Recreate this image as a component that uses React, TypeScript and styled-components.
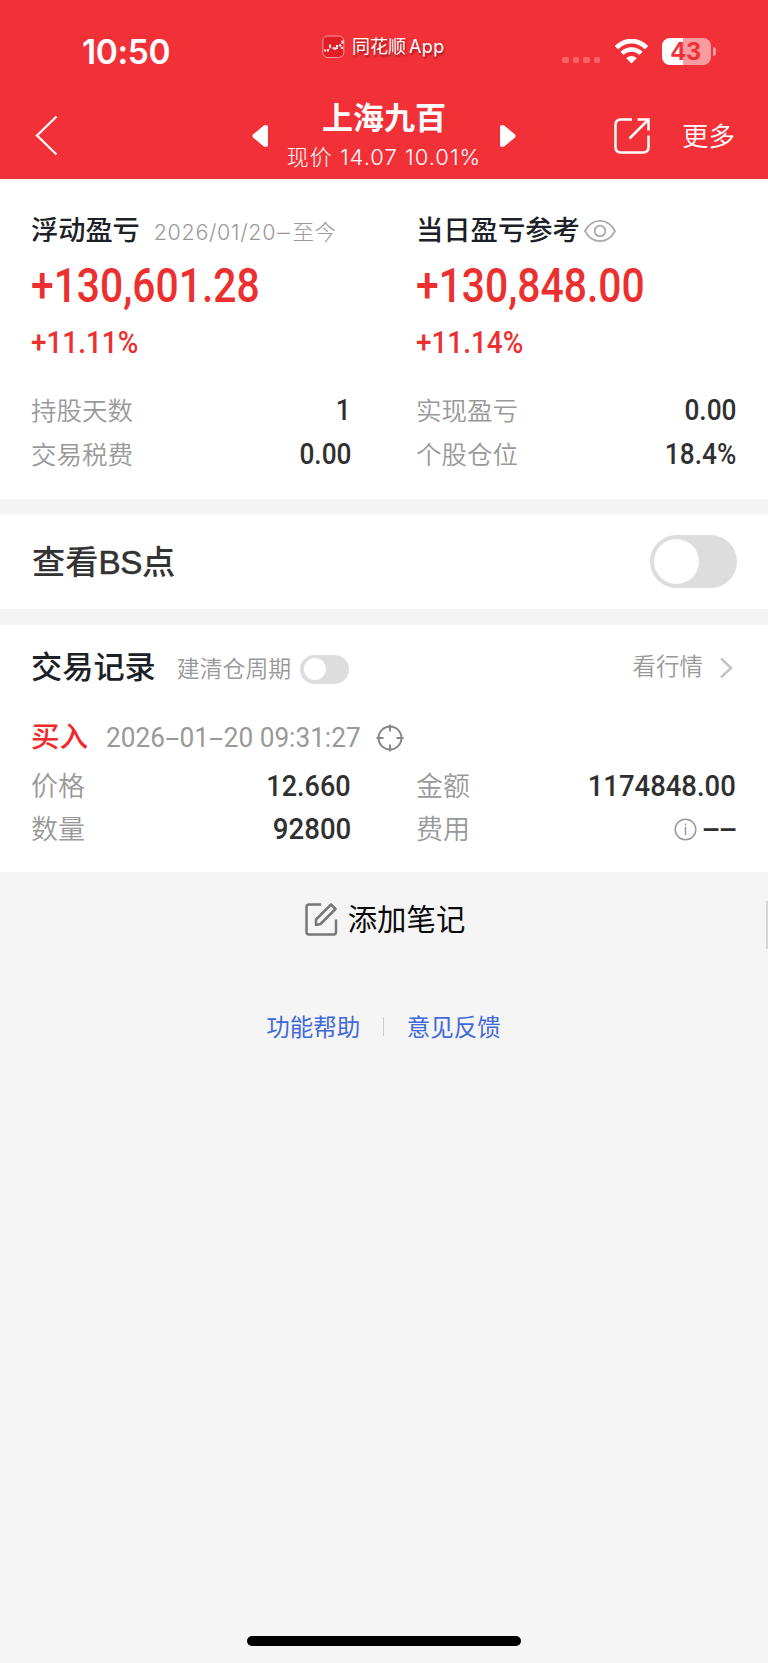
import React from 'react';
import styled, { createGlobalStyle } from 'styled-components';

const RED = '#f23038';
const PRICE_RED = '#ec2f2f';
const CJK = '"Noto Sans CJK SC", sans-serif';

const GlobalStyle = createGlobalStyle`
  * { box-sizing: border-box; }
  body { margin: 0; background: #f5f5f5; font-family: Inter, ${CJK}; }
`;

const Screen = styled.div`
  position: relative;
  display: flex;
  flex-direction: column;
  width: 768px;
  height: 1663px;
  background: #f5f5f5;
  overflow: hidden;
`;

/* ---------- header ---------- */
const Header = styled.header`
  height: 179px;
  background: ${RED};
  color: #fff;
`;

const StatusBar = styled.div`
  display: grid;
  grid-template-columns: 321px 1fr 206px;
  height: 94px;
  padding-top: 8px;
`;

const Clock = styled.div`
  padding-left: 82px;
  line-height: 88px;
  font-weight: 600;
  font-size: 33.5px;
  letter-spacing: -0.4px;
`;

const AppSource = styled.div`
  display: flex;
  align-items: center;
  height: 78px;
  gap: 7px;
  font-size: 18px;
  line-height: 26px;
  white-space: nowrap;
  text-shadow: 1px 2px 2px rgba(80, 0, 0, 0.5);
`;

const AppName = styled.span``;

const AppLatin = styled.span`
  margin-left: 3px;
  letter-spacing: 0.4px;
`;

const StatusIcons = styled.div`
  display: flex;
  align-items: center;
  height: 86px;
`;

const SignalDots = styled.div`
  display: flex;
  gap: 4px;
  margin-top: 18px;
  i {
    width: 6.5px;
    height: 6.5px;
    border-radius: 2px;
    background: rgba(255, 255, 255, 0.25);
  }
`;

const Wifi = styled.svg`
  margin-left: 15px;
`;

const Battery = styled.div`
  width: 49px;
  height: 27px;
  margin-left: 14px;
  border-radius: 8px;
  background: linear-gradient(90deg, #fff 21px, rgba(255, 255, 255, 0.52) 21px);
  color: ${RED};
  font-family: "Liberation Sans", sans-serif;
  font-weight: 700;
  font-size: 26px;
  letter-spacing: 1px;
  line-height: 27px;
  text-align: center;
`;

const BatteryNub = styled.div`
  width: 3px;
  height: 9px;
  margin-left: 1.5px;
  border-radius: 0 4px 4px 0;
  background: rgba(255, 255, 255, 0.5);
`;

const NavBar = styled.nav`
  display: flex;
  align-items: center;
  height: 84px;
  padding: 0 33px 0 34px;
`;

const BackIcon = styled.svg`
  margin-right: 194px;
`;

const StockTitle = styled.div`
  width: 230px;
  text-align: center;
  white-space: nowrap;
`;

const StockName = styled.div`
  font-size: 31px;
  font-weight: 700;
  line-height: 41px;
  height: 42px;
`;

const StockPrice = styled.div`
  font-size: 22px;
  font-weight: 300;
  line-height: 36px;
  height: 36px;
  letter-spacing: 1px;
`;

const ShareIcon = styled.svg`
  margin-left: 97px;
`;

const More = styled.div`
  margin-left: auto;
  font-size: 26.5px;
  font-weight: 350;
  line-height: 42px;
`;

/* ---------- shared ---------- */
const Panel = styled.section<{ $h: number }>`
  height: ${p => p.$h}px;
  background: #fff;
`;

const Gap = styled.div<{ $h: number }>`
  height: ${p => p.$h}px;
  background: #f4f4f4;
`;

const Columns = styled.div`
  display: grid;
  grid-template-columns: 320px 320px;
  column-gap: 65px;
  padding-left: 31px;
`;

const Heading = styled.h2<{ $size: number }>`
  margin: 0;
  font-size: ${p => p.$size}px;
  font-weight: 500;
  line-height: 40px;
  color: #1b2126;
  white-space: nowrap;
`;

const Digits = styled.span<{ $squeeze: number; $right?: boolean }>`
  display: inline-block;
  font-family: Roboto, sans-serif;
  white-space: nowrap;
  transform: scaleX(${p => p.$squeeze});
  transform-origin: ${p => (p.$right ? 'right' : 'left')} center;
`;

const DataRow = styled.div<{ $h: number }>`
  display: flex;
  align-items: center;
  justify-content: space-between;
  height: ${p => p.$h}px;
`;

const Label = styled.span<{ $size: number }>`
  font-size: ${p => p.$size}px;
  font-weight: 350;
  line-height: 40px;
  color: #999;
`;

const Value = styled(Digits)<{ $size: number; $lift?: number }>`
  padding-bottom: ${p => p.$lift ?? 0}px;
  font-size: ${p => p.$size}px;
  font-weight: 500;
  color: #303030;
`;

const Track = styled.span<{ $w: number; $h: number; $pad: number }>`
  display: inline-flex;
  flex: none;
  width: ${p => p.$w}px;
  height: ${p => p.$h}px;
  padding: ${p => p.$pad}px;
  border-radius: ${p => p.$h / 2}px;
  background: #ddd;
  &::before {
    content: '';
    height: 100%;
    aspect-ratio: 1;
    border-radius: 50%;
    background: #fff;
  }
`;

const CycleTrack = styled(Track)`
  margin-left: 9px;
  margin-top: 4px;
`;

const Wide = styled.span<{ $m: number }>`
  display: inline-block;
  margin: 0 ${p => p.$m}px;
  transform: scaleX(1.9);
`;

/* ---------- summary ---------- */
const SummaryTop = styled(Columns)`
  padding-top: 30px;
`;

const HeadRow = styled.div`
  display: flex;
  align-items: center;
  height: 41px;
  padding-top: 1px;

  ${Heading} {
    padding-top: 2px;
  }
`;

const Eye = styled.svg`
  margin: 2px 0 0 3px;
`;

const Period = styled.span`
  margin: 1px 0 0 14px;
  font-size: 21.5px;
  font-weight: 300;
  color: #999;
  letter-spacing: 0.65px;
  white-space: nowrap;
`;

const Profit = styled.div`
  height: 69.5px;
  line-height: 69px;
  font-size: 48px;
  font-weight: 500;
  color: ${PRICE_RED};
`;

const Percent = styled.div`
  height: 44px;
  line-height: 43px;
  font-size: 31px;
  font-weight: 500;
  color: ${PRICE_RED};
`;

const Stats = styled(Columns)`
  padding-top: 26px;
`;

/* ---------- BS row ---------- */
const BsRow = styled.div`
  display: flex;
  align-items: center;
  justify-content: space-between;
  height: 95px;
  padding: 0 31.5px 0 32px;
`;

const BsLabel = styled.span`
  padding-bottom: 4px;
  font-family: "Liberation Sans", ${CJK};
  font-size: 33.2px;
  font-weight: 450;
  color: #333;
  white-space: nowrap;
`;

const BsLetters = styled.span`
  letter-spacing: -0.3px;
  -webkit-text-stroke: 0.6px #333;
`;

/* ---------- records ---------- */
const RecordHead = styled.div`
  display: flex;
  align-items: center;
  height: 84px;
  padding: 0 35px 0 31px;
`;

const Muted = styled.span<{ $size: number; $ml: number }>`
  margin-left: ${p => p.$ml}px;
  font-size: ${p => p.$size}px;
  font-weight: 350;
  line-height: 36px;
  color: #999;
  white-space: nowrap;
`;

const CycleLabel = styled(Muted)`
  padding-top: 3px;
`;

const ToQuote = styled.div`
  display: flex;
  align-items: center;
  margin-left: auto;
  margin-bottom: 1px;
  gap: 16px;
`;

const Trade = styled.div`
  display: flex;
  align-items: center;
  height: 56px;
  padding-left: 31px;
`;

const Side = styled.span`
  width: 75px;
  padding-bottom: 5px;
  font-size: 28.5px;
  font-weight: 500;
  color: #f02a2a;
`;

const Time = styled.div`
  width: 270px;
  font-size: 28px;
  font-weight: 400;
  color: #999;
`;

const Target = styled.svg`
  margin-top: 2px;
`;

const Fee = styled.div`
  display: flex;
  align-items: center;
  gap: 5px;
  padding-bottom: 2px;
`;

/* ---------- footer ---------- */
const AddNote = styled.div`
  display: flex;
  align-items: center;
  justify-content: center;
  height: 94px;
  gap: 10px;
  padding-left: 1px;
  font-size: 29.4px;
  color: #0a0a0a;
`;

const NoteText = styled.span`
  padding-bottom: 5px;
`;

const Links = styled.div`
  display: flex;
  align-items: center;
  justify-content: center;
  height: 120px;
  gap: 22.5px;
  padding-right: 1px;
  font-size: 23.5px;
  color: #4169d8;
`;

const Divider = styled.span`
  width: 1.5px;
  height: 19px;
  background: #ccc;
`;

const HomeBar = styled.div`
  width: 274px;
  height: 10px;
  margin: auto auto 17px 247px;
  border-radius: 5px;
  background: #000;
`;

const ScrollThumb = styled.div`
  position: absolute;
  right: 0;
  top: 901px;
  width: 2px;
  height: 48px;
  background: #d6d6d6;
`;

const stats = [
  ['持股天数', '1', '实现盈亏', '0.00'],
  ['交易税费', '0.00', '个股仓位', '18.4%'],
];

export default function App() {
  return (
    <Screen>
      <GlobalStyle />
      <Header>
        <StatusBar>
          <Clock>10:50</Clock>
          <AppSource>
            <svg width="24" height="24" viewBox="0 0 24 24">
              <rect x="1.8" y="1" width="21" height="21.5" rx="5" fill="#df1f25" stroke="#f79a9d" strokeWidth="1" />
              <path d="M3 15.200l2 .6M7 14v2.600M9 9.500v3M12 14l1.500-1 1.500 1.500M16 10v4M18.500 9.500l1.500 2M21.500 5.500v3M21 12v2" stroke="#fff" strokeWidth="1.900" fill="none" />
              <path d="M3 15.500l4-.5 3-2.500 4 1.200 4-3 3.500-3" stroke="#ffb9bb" strokeWidth=".7" fill="none" />
            </svg>
            <AppName>同花顺<AppLatin>App</AppLatin></AppName>
          </AppSource>
          <StatusIcons>
            <SignalDots><i /><i /><i /><i /></SignalDots>
            <Wifi width="33" height="25" viewBox="0 0 33 25" fill="none" stroke="#fff" strokeWidth="4.600">
              <path d="M1.500 8.600C10-.1 23-.1 31.500 8.600" />
              <path d="M7 14.400c5.500-5.200 13.500-5.200 19 0" />
              <path d="M11.300 19.200c3-2.800 7.400-2.800 10.400 0L16.500 24.500z" fill="#fff" stroke="none" />
            </Wifi>
            <Battery>43</Battery>
            <BatteryNub />
          </StatusIcons>
        </StatusBar>
        <NavBar>
          <BackIcon width="24" height="42" viewBox="0 0 24 42" fill="none" stroke="#fff" strokeWidth="2.200">
            <path d="M22.500 1.500L3 20.500l19.500 19" />
          </BackIcon>
          <svg width="17" height="24" viewBox="0 0 17 24" fill="#fff">
            <path d="M1.200 10.300L11.500 1.800Q16 -.5 16 4v16Q16 24.500 11.500 22.200L1.200 13.700Q-.3 12 1.200 10.300z" />
          </svg>
          <StockTitle>
            <StockName>上海九百</StockName>
            <StockPrice>现价 14.07 10.01%</StockPrice>
          </StockTitle>
          <svg width="17" height="24" viewBox="0 0 17 24" fill="#fff">
            <path d="M15.800 10.300L5.500 1.800Q1 -.5 1 4v16Q1 24.500 5.500 22.200L15.800 13.700Q17.300 12 15.800 10.300z" />
          </svg>
          <ShareIcon width="38" height="38" viewBox="0 0 38 38" fill="none" stroke="#fff" strokeWidth="2.500">
            <path d="M19 2.500H8Q2.500 2.500 2.500 8v22Q2.500 35.500 8 35.500h22q5.500 0 5.500-5.500V18.500" />
            <path d="M24.500 2.500h11v11M35 3L16.500 21.500" />
          </ShareIcon>
          <More>更多</More>
        </NavBar>
      </Header>

      <Panel $h={319.5}>
        <SummaryTop>
          <div>
            <HeadRow>
              <Heading $size={27.2}>浮动盈亏</Heading>
              <Period>2026/01/20<Wide $m={3}>-</Wide>至今</Period>
            </HeadRow>
            <Profit><Digits $squeeze={0.85}>+130,601.28</Digits></Profit>
            <Percent><Digits $squeeze={0.9}>+11.11%</Digits></Percent>
          </div>
          <div>
            <HeadRow>
              <Heading $size={27.3}>当日盈亏参考</Heading>
              <Eye width="34" height="24" viewBox="0 0 34 24" fill="none" stroke="#aaa" strokeWidth="1.800">
                <path d="M2 12C9-1.500 25-1.500 32 12C25 25.500 9 25.500 2 12z" />
                <circle cx="17" cy="12" r="5.300" />
              </Eye>
            </HeadRow>
            <Profit><Digits $squeeze={0.85}>+130,848.00</Digits></Profit>
            <Percent><Digits $squeeze={0.9}>+11.14%</Digits></Percent>
          </div>
        </SummaryTop>
        <Stats>
          {stats.map(([a, b, c, d]) => (
            <React.Fragment key={a}>
              <DataRow $h={43.500}><Label $size={25.500}>{a}</Label><Value $size={29.500} $lift={2} $squeeze={0.89} $right>{b}</Value></DataRow>
              <DataRow $h={43.500}><Label $size={25.500}>{c}</Label><Value $size={29.500} $lift={2} $squeeze={0.89} $right>{d}</Value></DataRow>
            </React.Fragment>
          ))}
        </Stats>
      </Panel>

      <Gap $h={15.500} />
      <Panel $h={95}>
        <BsRow>
          <BsLabel>查看<BsLetters>BS</BsLetters>点</BsLabel>
          <Track $w={87} $h={53} $pad={4} />
        </BsRow>
      </Panel>
      <Gap $h={16} />

      <Panel $h={247}>
        <RecordHead>
          <Heading $size={31.200}>交易记录</Heading>
          <CycleLabel $size={22.900} $ml={21}>建清仓周期</CycleLabel>
          <CycleTrack $w={49} $h={29} $pad={3.500} />
          <ToQuote>
            <Muted $size={23.500} $ml={0}>看行情</Muted>
            <svg width="14" height="22" viewBox="0 0 14 22" fill="none" stroke="#c4c4c4" strokeWidth="2.500">
              <path d="M2 2.500l10 9.500-10 9.500" />
            </svg>
          </ToQuote>
        </RecordHead>
        <Trade>
          <Side>买入</Side>
          <Time>
            <Digits $squeeze={0.935}>2026<Wide $m={4}>-</Wide>01<Wide $m={4}>-</Wide>20 09:31:27</Digits>
          </Time>
          <Target width="28" height="28" viewBox="0 0 28 28" fill="none" stroke="#888" strokeWidth="1.900">
            <circle cx="14" cy="14" r="11.500" />
            <path d="M14 .5v7M14 20.500v7M.5 14h7M20.500 14h7" />
          </Target>
        </Trade>
        <Columns>
          <DataRow $h={43.500}><Label $size={27}>价格</Label><Value $size={30} $lift={2} $squeeze={0.9} $right>12.660</Value></DataRow>
          <DataRow $h={43.500}><Label $size={27}>金额</Label><Value $size={30} $lift={2} $squeeze={0.915} $right>1174848.00</Value></DataRow>
          <DataRow $h={43.500}><Label $size={27}>数量</Label><Value $size={30} $lift={3} $squeeze={0.92} $right>92800</Value></DataRow>
          <DataRow $h={43.500}>
            <Label $size={27}>费用</Label>
            <Fee>
              <svg width="23" height="23" viewBox="0 0 23 23" fill="none" stroke="#999" strokeWidth="1.500">
                <circle cx="11.500" cy="11.500" r="10.300" />
                <path d="M11.500 9v8M11.500 5.500v2" />
              </svg>
              <Value $size={30} $lift={2} $squeeze={1} $right><Wide $m={3.300}>-</Wide><Wide $m={3.300}>-</Wide></Value>
            </Fee>
          </DataRow>
        </Columns>
      </Panel>

      <AddNote>
        <svg width="34" height="34" viewBox="0 0 34 34" fill="none" stroke="#777" strokeWidth="2.500" strokeLinejoin="round">
          <path d="M17 2.500H5Q2.500 2.500 2.500 5v25Q2.500 32.500 5 32.500h24.500Q32 32.500 32 30V17.500" />
          <path d="M12 23v-5.500L27 2.500l4.500 4.500L16.500 22z" />
        </svg>
        <NoteText>添加笔记</NoteText>
      </AddNote>
      <Links>
        <span>功能帮助</span>
        <Divider />
        <span>意见反馈</span>
      </Links>
      <HomeBar />
      <ScrollThumb />
    </Screen>
  );
}
